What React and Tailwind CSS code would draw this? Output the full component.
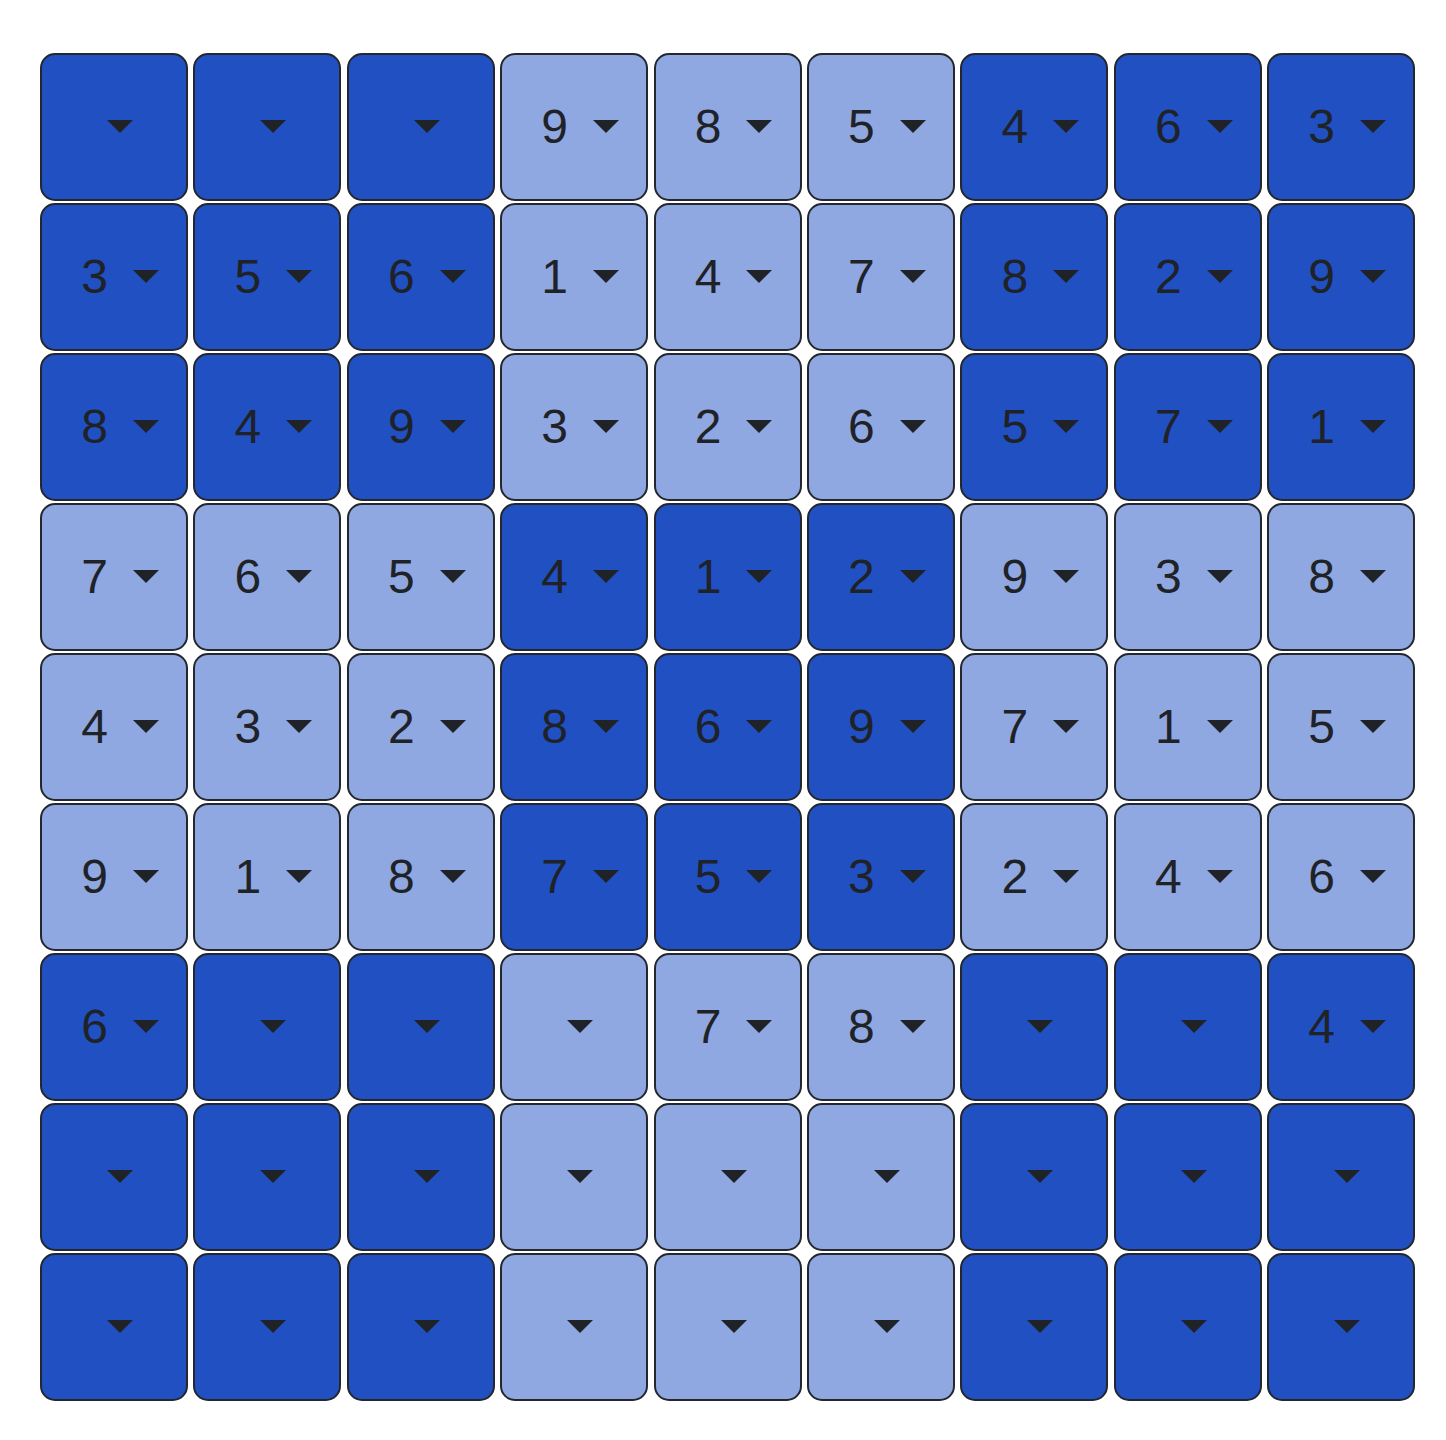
import React from 'react'

const board = [
  [0, 0, 0, 9, 8, 5, 4, 6, 3],
  [3, 5, 6, 1, 4, 7, 8, 2, 9],
  [8, 4, 9, 3, 2, 6, 5, 7, 1],
  [7, 6, 5, 4, 1, 2, 9, 3, 8],
  [4, 3, 2, 8, 6, 9, 7, 1, 5],
  [9, 1, 8, 7, 5, 3, 2, 4, 6],
  [6, 0, 0, 0, 7, 8, 0, 0, 4],
  [0, 0, 0, 0, 0, 0, 0, 0, 0],
  [0, 0, 0, 0, 0, 0, 0, 0, 0],
]

const Arrow = () => (
  <svg width="26" height="13" viewBox="0 0 26 13" className="shrink-0">
    <path d="M0 0 H26 L13 13 Z" fill="#1f2227" />
  </svg>
)

// one select-like cell; dark or light depending on its 3x3 box
const Cell = ({ value, dark }) => (
  <div
    className={
      'flex items-center justify-center gap-[25px] pl-[12px] rounded-[15px] border-2 border-[#24272c] ' +
      (dark ? 'bg-[#2150c2]' : 'bg-[#8fa8e1]')
    }
  >
    {value ? (
      <span className="text-[48px] leading-none text-[#1f2227] tabular-nums">{value}</span>
    ) : null}
    <Arrow />
  </div>
)

export default function App() {
  return (
    <div className="min-h-screen bg-white pt-[53px] pl-[40px]" style={{ fontFamily: '"Liberation Sans", Arial, sans-serif' }}>
      <div className="grid grid-cols-[repeat(9,148px)] grid-rows-[repeat(9,147.5px)] gap-x-[5.4px] gap-y-[2.5px]">
        {board.map((row, r) =>
          row.map((v, c) => {
            const dark = (Math.floor(r / 3) + Math.floor(c / 3)) % 2 === 0
            return <Cell key={r + '-' + c} value={v} dark={dark} />
          })
        )}
      </div>
    </div>
  )
}
